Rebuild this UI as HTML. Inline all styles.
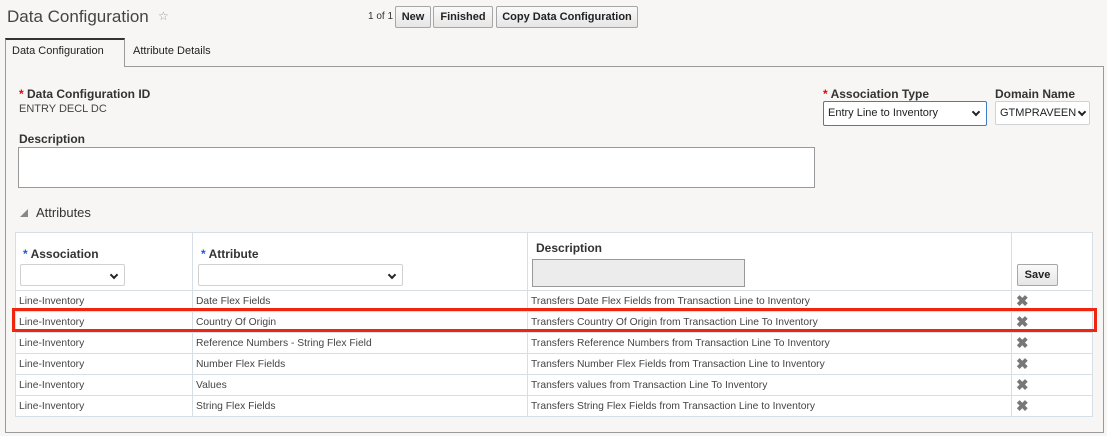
<!DOCTYPE html>
<html><head><meta charset="utf-8"><style>
*{box-sizing:border-box;margin:0;padding:0}
body{width:1107px;height:436px;background:#f7f6f4;font-family:"Liberation Sans",Arial,sans-serif;color:#333;position:relative;overflow:hidden}
.a{position:absolute;white-space:nowrap}
.btn{position:absolute;top:6px;height:22px;border:1px solid #a6a6a6;border-radius:2px;background:linear-gradient(#fafafa,#e6e6e6);font-size:11px;font-weight:bold;color:#222;text-align:center;line-height:20px}
.lbl{font-size:12px;font-weight:bold;color:#333}
.req{color:#e00;font-weight:bold}
.breq{color:#1a5fd8;font-weight:bold}
.sel{position:absolute;background:#fff;border:1px solid #cfd2d5;border-radius:2px;font-size:11px;line-height:22px;padding-left:4px;color:#222}
.chev{position:absolute;right:7px;top:7px;width:6px;height:6px;border-right:2px solid #222;border-bottom:2px solid #222;transform:rotate(45deg)}
table{position:absolute;left:15px;top:232px;border-collapse:collapse;background:#fff}
td{border:1px solid #d6dfe6;font-size:10.3px;color:#444;height:21px;padding:0 3px;vertical-align:middle}
.x{font-size:15px;color:#777;font-weight:bold;text-align:left;padding:0 0 0 4px}
</style></head><body>
<div class="a" style="left:7px;top:7px;font-size:17px;color:#444">Data Configuration</div>
<div class="a" style="left:158px;top:9px;font-size:12px;color:#999">☆</div>
<div class="a" style="left:368px;top:11px;font-size:10px;color:#333">1 of 1</div>
<div class="btn" style="left:395px;width:36px">New</div>
<div class="btn" style="left:433px;width:60px">Finished</div>
<div class="btn" style="left:496px;width:142px">Copy Data Configuration</div>

<div class="a" style="left:5px;top:66px;width:1099px;height:367px;border:1px solid #9a9a9a;background:#f7f6f4"></div>
<div class="a" style="left:5px;top:38px;width:120px;height:29px;border:1px solid #9a9a9a;border-top:2px solid #333;border-bottom:none;background:#f7f6f4"></div>
<div class="a" style="left:12px;top:45px;font-size:11px;color:#222">Data Configuration</div>
<div class="a" style="left:133px;top:45px;font-size:11px;color:#222">Attribute Details</div>

<div class="a lbl" style="left:19px;top:87px"><span class="req">* </span>Data Configuration ID</div>
<div class="a" style="left:19px;top:103px;font-size:11px;color:#444">ENTRY DECL DC</div>
<div class="a lbl" style="left:823px;top:87px"><span class="req">* </span>Association Type</div>
<div class="sel" style="left:823px;top:101px;width:164px;height:25px;border:1px solid #3a7dc9">Entry Line to Inventory<span class="chev"></span></div>
<div class="a lbl" style="left:995px;top:87px">Domain Name</div>
<div class="sel" style="left:995px;top:101px;width:95px;height:24px;overflow:hidden">GTMPRAVEEN<span class="chev" style="right:4px"></span></div>

<div class="a lbl" style="left:19px;top:132px">Description</div>
<div class="a" style="left:18px;top:147px;width:797px;height:41px;background:#fff;border:1px solid #999"></div>

<div class="a" style="left:20px;top:209px;width:0;height:0;border-left:8px solid transparent;border-bottom:8px solid #888"></div>
<div class="a" style="left:36px;top:205px;font-size:13px;color:#333">Attributes</div>

<table>
<tr style="height:58px"><td style="width:177px;position:relative;vertical-align:top"><div class="a lbl" style="left:7px;top:14px"><span class="breq">* </span>Association</div><div class="sel" style="left:4px;top:31px;width:105px;height:22px"><span class="chev"></span></div></td>
<td style="width:335px;position:relative;vertical-align:top"><div class="a lbl" style="left:8px;top:14px"><span class="breq">* </span>Attribute</div><div class="sel" style="left:5px;top:31px;width:205px;height:22px"><span class="chev"></span></div></td>
<td style="width:484px;position:relative;vertical-align:top"><div class="a lbl" style="left:8px;top:8px">Description</div><div class="a" style="left:4px;top:26px;width:213px;height:28px;background:#ececec;border:1px solid #999"></div></td>
<td style="width:81px;position:relative"><div class="btn" style="left:5px;top:31px;width:41px;height:22px">Save</div></td></tr>
<tr><td>Line-Inventory</td><td>Date Flex Fields</td><td>Transfers Date Flex Fields from Transaction Line to Inventory</td><td class="x">✖</td></tr>
<tr><td>Line-Inventory</td><td>Country Of Origin</td><td>Transfers Country Of Origin from Transaction Line To Inventory</td><td class="x">✖</td></tr>
<tr><td>Line-Inventory</td><td>Reference Numbers - String Flex Field</td><td>Transfers Reference Numbers from Transaction Line To Inventory</td><td class="x">✖</td></tr>
<tr><td>Line-Inventory</td><td>Number Flex Fields</td><td>Transfers Number Flex Fields from Transaction Line to Inventory</td><td class="x">✖</td></tr>
<tr><td>Line-Inventory</td><td>Values</td><td>Transfers values from Transaction Line To Inventory</td><td class="x">✖</td></tr>
<tr><td>Line-Inventory</td><td>String Flex Fields</td><td>Transfers String Flex Fields from Transaction Line to Inventory</td><td class="x">✖</td></tr>
</table>
<div class="a" style="left:12px;top:308px;width:1085px;height:24px;border:3px solid #f0250f"></div>
</body></html>
